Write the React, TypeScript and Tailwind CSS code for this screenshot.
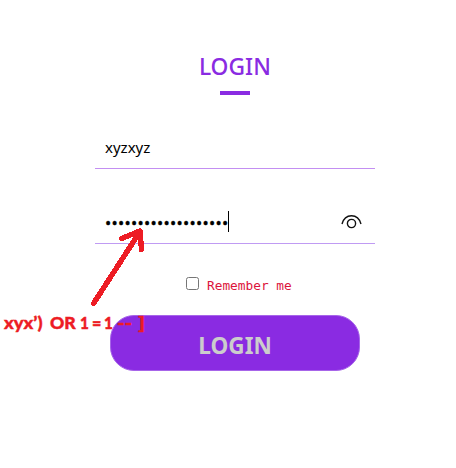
function Annotation() {
  return (
    <>
      <svg className="pointer-events-none absolute left-0 top-0" width="456" height="468" fill="none" stroke="#ed1c24" strokeWidth="5.4" strokeLinecap="round" strokeLinejoin="round" shapeRendering="crispEdges">
        <path d="M93.5 303.5L140 231.5M121.5 238.5L140 231L141.5 249.5" />
      </svg>
      <div className="pointer-events-none absolute left-[4px] top-[311px] flex h-[24px] items-center whitespace-nowrap font-['Lato','Open_Sans',sans-serif] text-[17px] font-black leading-[24px] text-[#ed1c24] [-webkit-text-stroke:0.4px_#ed1c24]">
        <span className="w-[45.5px] origin-left scale-x-[1.08]">xyx’)</span>
        <span className="w-[30px] origin-left scale-x-[1.04]">OR</span>
        <span className="w-[12px] origin-left scale-x-90">1</span>
        <span className="w-[12.5px] origin-left scale-x-95">=</span>
        <span className="w-[12.5px] origin-left scale-x-90">1</span>
        <span className="w-[21.5px] origin-left scale-x-[1.2]">--</span>
        <span className="origin-left scale-x-[1.35]">]</span>
      </div>
    </>
  );
}

export default function App() {
  return (
    <main className="relative flex h-[468px] w-[456px] flex-col overflow-hidden bg-white pl-[95px] font-['Noto_Sans','Open_Sans',sans-serif]">
      <form className="flex w-[280px] flex-col items-center pt-[50px]">
        <h1 className="h-[32px] scale-x-[0.95] whitespace-nowrap text-[24px] font-medium leading-[32px] text-[#8a2be2]">LOGIN</h1>
        <div className="mt-[8.5px] h-[4px] w-[30px] bg-[#8a2be2]" />
        <div className="mt-[33.5px] flex h-[41px] w-full items-center border-b border-[#c38ff2] pb-[2px] pl-[10px] text-[15px] leading-[20px] text-black">
          <span>xyzxyz</span>
        </div>
        <div className="mt-[34px] flex h-[41px] w-full items-center border-b border-[#c09bf3] pl-[10px] pr-[13px] text-black">
          <span className="w-[123px] text-[16.5px] leading-[20px] tracking-[0.29px] [-webkit-text-stroke:0.3px_black]">•••••••••••••••••••</span>
          <span className="mt-[-3px] h-[21px] w-px shrink-0 bg-black" />
          <svg className="ml-auto" width="21" height="20" viewBox="0 0 21 20" fill="none" stroke="#111" strokeWidth="1.4">
            <path d="M1 11C4 0 17 0 20 11" />
            <circle cx="10.5" cy="10.5" r="4.1" />
          </svg>
        </div>
        <label className="mt-[30px] flex h-[20px] w-full items-center pl-[91px]">
          <span className="mt-[-1px] h-[13px] w-[13px] rounded-[2.5px] border border-[#767676] bg-white" />
          <span className="ml-[8px] mt-[4px] whitespace-nowrap font-['DejaVu_Sans_Mono',monospace] text-[12.8px] leading-[18px] text-[#dc143c]">Remember me</span>
        </label>
        <button type="button" className="mt-[21px] flex h-[56px] w-[250px] items-center justify-center rounded-[24px] border border-[#a765e9] bg-[#8a2be2] pt-[4px] text-[24px] font-bold leading-[32px] text-[#cccccc]">
          <span className="scale-x-[0.94]">LOGIN</span>
        </button>
      </form>
      <Annotation />
    </main>
  );
}
